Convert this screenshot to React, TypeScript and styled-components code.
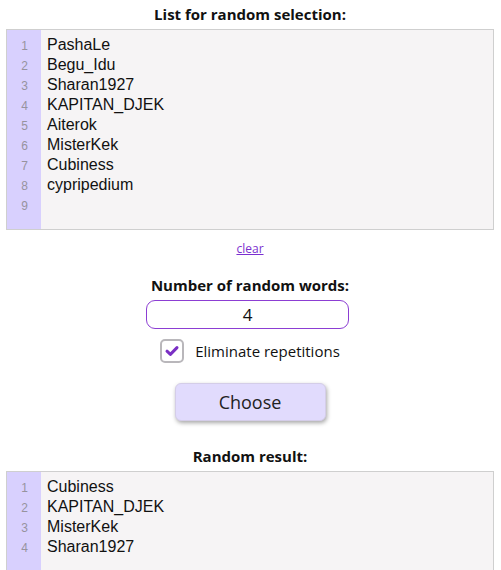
import { useState } from "react";
import styled, { createGlobalStyle } from "styled-components";

const GlobalStyle = createGlobalStyle`
  body {
    margin: 0;
    background: #ffffff;
    font-family: "Open Sans", "Noto Sans", sans-serif;
    color: #111;
  }
`;

const Page = styled.div`
  display: flex;
  flex-direction: column;
  align-items: center;
  padding: 0 7px 0 6px;
`;

const Title = styled.div<{ $top: number }>`
  margin-top: ${(p) => p.$top}px;
  font-size: 15px;
  font-weight: 700;
  line-height: 20px;
  text-align: center;
`;

const Editor = styled.div<{ $height: number }>`
  display: flex;
  width: 100%;
  height: ${(p) => p.$height}px;
  box-sizing: border-box;
  margin-top: 5px;
  border: 1px solid #cfcfcf;
  background: #f6f4f5;
`;

const Gutter = styled.div`
  width: 34px;
  flex-shrink: 0;
  background: #d8d0fe;
  padding-top: 6px;
  display: flex;
  flex-direction: column;
`;

const LineNo = styled.span`
  height: 20px;
  line-height: 20px;
  font-family: "Liberation Sans", Arial, sans-serif;
  font-size: 12px;
  color: #97939e;
  text-align: center;
  padding-left: 1px;
`;

const Area = styled.textarea`
  flex: 1;
  border: none;
  outline: none;
  resize: none;
  background: transparent;
  padding: 5px 6px 0;
  margin: 0;
  font-family: "Liberation Sans", Arial, sans-serif;
  font-size: 16px;
  line-height: 20px;
  color: #111;
  overflow: hidden;
`;

const ClearLink = styled.a`
  margin-top: 11px;
  font-size: 12px;
  line-height: 16px;
  color: #7b2fcf;
  text-decoration: underline;
  cursor: pointer;
`;

const NumberInput = styled.input`
  width: 203px;
  height: 29px;
  box-sizing: border-box;
  margin: 5px 5px 0 0;
  border: 1px solid #8c3ed3;
  border-radius: 9px;
  text-align: center;
  font-family: "Open Sans", "Noto Sans", sans-serif;
  font-size: 17px;
  color: #111;
  outline: none;
`;

const CheckRow = styled.label`
  display: flex;
  align-items: center;
  gap: 11px;
  margin-top: 10px;
  font-size: 15px;
  cursor: pointer;
`;

const CheckBox = styled.span`
  width: 24px;
  height: 24px;
  box-sizing: border-box;
  border: 2px solid #b9b7bb;
  border-radius: 5px;
  display: flex;
  align-items: center;
  justify-content: center;
  background: #fff;
`;

const ChooseButton = styled.button`
  margin-top: 20px;
  width: 151px;
  height: 38px;
  border: 1px solid #d4cde8;
  border-radius: 6px;
  background: #e1dbfd;
  box-shadow: 1px 2px 4px rgba(0, 0, 0, 0.35);
  font-family: "Open Sans", "Noto Sans", sans-serif;
  font-size: 18px;
  color: #222;
  cursor: pointer;
`;

const source = [
  "PashaLe",
  "Begu_Idu",
  "Sharan1927",
  "KAPITAN_DJEK",
  "Aiterok",
  "MisterKek",
  "Cubiness",
  "cypripedium",
  "",
];

const result = ["Cubiness", "KAPITAN_DJEK", "MisterKek", "Sharan1927"];

function LinedBox({ lines, height }: { lines: string[]; height: number }) {
  const [text, setText] = useState(lines.join("\n"));
  const count = text.split("\n").length;

  return (
    <Editor $height={height}>
      <Gutter>
        {Array.from({ length: count }, (_, i) => (
          <LineNo key={i}>{i + 1}</LineNo>
        ))}
      </Gutter>
      <Area value={text} onChange={(e) => setText(e.target.value)} spellCheck={false} />
    </Editor>
  );
}

export default function App() {
  const [words, setWords] = useState("4");
  const [unique, setUnique] = useState(true);

  return (
    <>
      <GlobalStyle />
      <Page>
        <Title $top={4}>List for random selection:</Title>
        <LinedBox lines={source} height={201} />
        <ClearLink>clear</ClearLink>
        <Title $top={18}>Number of random words:</Title>
        <NumberInput value={words} onChange={(e) => setWords(e.target.value)} />
        <CheckRow onClick={() => setUnique(!unique)}>
          <CheckBox>
            {unique && (
              <svg width="16" height="16" viewBox="0 0 16 16">
                <path
                  d="M3 8.2 L6.4 11.4 L13 4.6"
                  fill="none"
                  stroke="#7a2fc4"
                  strokeWidth="3"
                  strokeLinecap="round"
                  strokeLinejoin="round"
                />
              </svg>
            )}
          </CheckBox>
          Eliminate repetitions
        </CheckRow>
        <ChooseButton>Choose</ChooseButton>
        <Title $top={25}>Random result:</Title>
        <LinedBox lines={result} height={110} />
      </Page>
    </>
  );
}
